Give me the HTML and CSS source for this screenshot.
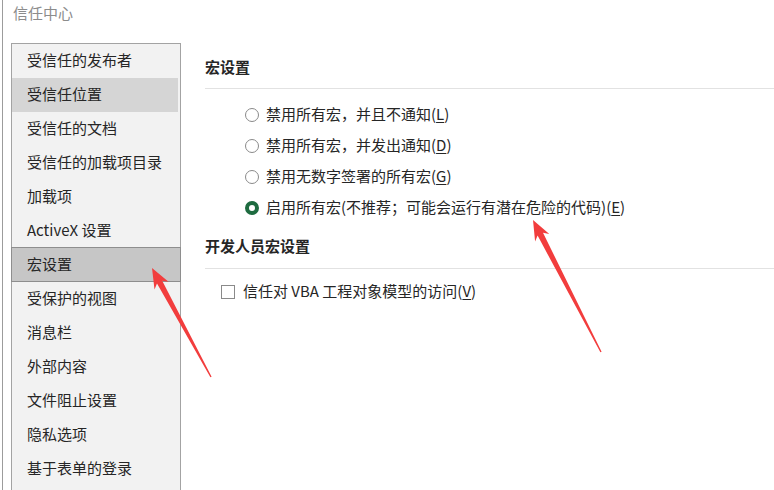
FILE: index.html
```html
<!DOCTYPE html>
<html lang="zh-CN">
<head>
	<meta charset="UTF-8">
	<meta name="viewport" content="width=device-width, initial-scale=1.0">
	<title>信任中心</title>
	<link rel="stylesheet" href="styles.css">
</head>
<body>
	<div class="window">
		<div class="title">信任中心</div>
		<div class="main">
			<ul class="nav">
				<li>受信任的发布者</li>
				<li class="hover">受信任位置</li>
				<li>受信任的文档</li>
				<li>受信任的加载项目录</li>
				<li>加载项</li>
				<li>ActiveX 设置</li>
				<li class="selected">宏设置</li>
				<li>受保护的视图</li>
				<li>消息栏</li>
				<li>外部内容</li>
				<li>文件阻止设置</li>
				<li>隐私选项</li>
				<li>基于表单的登录</li>
			</ul>
			<div class="panel">
				<div class="section-title">宏设置</div>
				<div class="options">
					<div class="option"><span class="radio"></span><span class="label">禁用所有宏，并且不通知(<u>L</u>)</span></div>
					<div class="option"><span class="radio"></span><span class="label">禁用所有宏，并发出通知(<u>D</u>)</span></div>
					<div class="option"><span class="radio"></span><span class="label">禁用无数字签署的所有宏(<u>G</u>)</span></div>
					<div class="option"><span class="radio on"></span><span class="label">启用所有宏(不推荐；可能会运行有潜在危险的代码)(<u>E</u>)</span></div>
				</div>
				<div class="section-title dev">开发人员宏设置</div>
				<div class="check-row"><span class="checkbox"></span><span class="label">信任对 VBA 工程对象模型的访问(<u>V</u>)</span></div>
			</div>
		</div>
		<!-- annotation arrows drawn over the dialog -->
		<svg class="annot" width="774" height="490" viewBox="0 0 774 490">
			<polygon points="152,268 168.5,281.8 162.2,280.7 211.6,376.7 210.4,377.3 157,283.5 154.5,289.4" />
			<polygon points="533,220 549.3,234.1 543,232.8 601.6,351.7 600.4,352.3 537.6,235.6 535.1,241.5" />
		</svg>
	</div>
</body>
</html>
```

FILE: styles.css
```css
html, body {
	margin: 0;
	padding: 0;
	background: #ffffff;
}
body {
	font-family: "Noto Sans CJK SC", "Noto Sans", sans-serif;
	font-size: 15px;
	color: #262626;
}
.window {
	position: relative;
	margin-left: 2px;
	height: 490px;
	border-left: 1px solid #9c9c9c;
	overflow: hidden;
}
.title {
	height: 43px;
	box-sizing: border-box;
	padding: 3px 0 0 10px;
	line-height: 20px;
	color: #8c8c8c;
}
.main {
	display: flex;
	align-items: flex-start;
}
.nav {
	list-style: none;
	margin: 0 0 0 8px;
	padding: 0;
	width: 170px;
	height: 460px;
	box-sizing: border-box;
	border: 1px solid #a3a3a3;
	border-bottom: none;
	background: #f2f2f2;
}
.nav li {
	height: 32px;
	line-height: 32px;
	padding: 0 0 2px 15px;
	white-space: nowrap;
}
.nav li.hover {
	background: #d5d5d5;
	margin-right: 2px;
}
.nav li.selected {
	background: #c6c6c6;
	border: 1px solid #8e8e8e;
	margin: -1px -1px 0 -1px;
	height: 31px;
	line-height: 31px;
}
.panel {
	flex: 1;
	padding-left: 24px;
}
.section-title {
	font-weight: bold;
	line-height: 20px;
	padding: 14px 0 11px 0;
	border-bottom: 1px solid #e2e2e2;
}
.section-title.dev {
	margin-top: 13px;
	padding: 0 0 12px 0;
}
.options {
	padding: 10px 0 0 40px;
}
.option {
	display: flex;
	align-items: center;
	gap: 7px;
	height: 31px;
	white-space: nowrap;
}
.radio {
	width: 14px;
	height: 14px;
	box-sizing: border-box;
	border: 1px solid #8a8a8a;
	border-radius: 50%;
	background: #fff;
	flex: none;
}
.radio.on {
	border: 4px solid #1e6b40;
}
.label {
	margin-top: -2px;
}
.check-row {
	display: flex;
	align-items: center;
	gap: 8px;
	height: 31px;
	margin-top: 7px;
	padding-left: 16px;
	white-space: nowrap;
}
.checkbox {
	width: 14px;
	height: 14px;
	box-sizing: border-box;
	border: 1px solid #8a8a8a;
	background: #fff;
	flex: none;
}
u {
	text-underline-offset: 2px;
}
.annot {
	position: absolute;
	left: -3px;
	top: 0;
	pointer-events: none;
}
.annot polygon {
	fill: #f23d3d;
}
```
